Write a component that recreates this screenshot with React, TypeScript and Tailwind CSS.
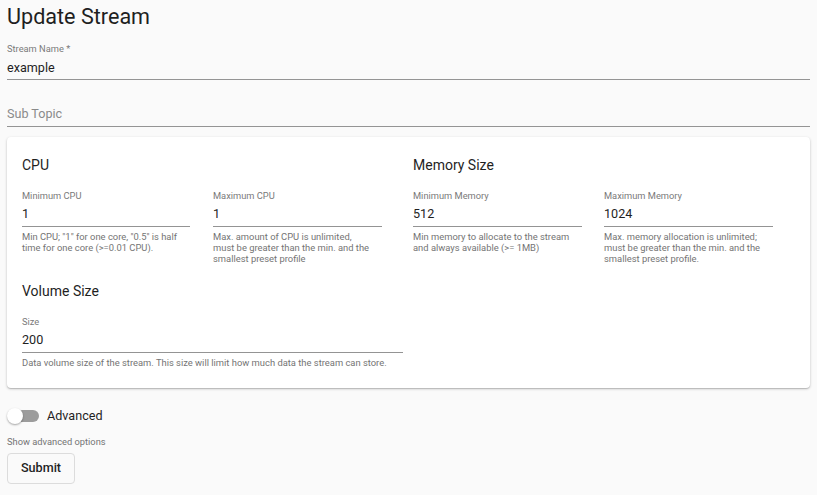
import { useState } from 'react';

const font = { fontFamily: 'Roboto, "Liberation Sans", sans-serif' };

function Field({
  label,
  value,
  helper,
  width,
}: {
  label: string;
  value: string;
  helper: string[];
  width: string;
}) {
  return (
    <div className={width}>
      <div className="mt-[15px] text-[9.3px] leading-[11px] text-[#7a7a7a]">{label}</div>
      <div className="mt-[4px] pb-[3px] border-b border-[#949494]">
        <div className="text-[12.6px] leading-[18px] text-[#1f1f1f]">{value}</div>
      </div>
      <div className="mt-[4px] text-[9.4px] leading-[11px] text-[#747474]">
        {helper.map((h) => (
          <div key={h}>{h}</div>
        ))}
      </div>
    </div>
  );
}

export default function App() {
  const [advanced, setAdvanced] = useState(false);

  return (
    <div className="min-h-screen w-full bg-[#fafafa] px-[7px] pt-[3px]" style={font}>
      <h1 className="text-[21.6px] leading-[28px] font-normal text-[#1f1f1f]">Update Stream</h1>

      <div className="mt-[12px]">
        <div className="text-[9.3px] leading-[11px] text-[#7a7a7a]">Stream Name *</div>
        <div className="mt-[5px] pb-[2px] border-b border-[#949494]">
          <div className="text-[12.6px] leading-[18px] text-[#1f1f1f]">example</div>
        </div>
      </div>

      <div className="mt-[25px] pb-[3px] border-b border-[#949494]">
        <div className="text-[12.6px] leading-[18px] text-[#8a8a8a]">Sub Topic</div>
      </div>

      <div className="mt-[10px] bg-white rounded-[4px] shadow-[0_1px_3px_rgba(0,0,0,0.2),0_1px_1px_rgba(0,0,0,0.14)] px-[15px] pt-[18px] pb-[20px]">
        <div className="flex">
          <div className="w-[391px]">
            <div className="text-[14px] leading-[20px] text-[#1f1f1f]">CPU</div>
            <div className="flex gap-x-[23px]">
              <Field
                width="w-[168px]"
                label="Minimum CPU"
                value="1"
                helper={['Min CPU; "1" for one core, "0.5" is half', 'time for one core (>=0.01 CPU).']}
              />
              <Field
                width="w-[169px]"
                label="Maximum CPU"
                value="1"
                helper={[
                  'Max. amount of CPU is unlimited,',
                  'must be greater than the min. and the',
                  'smallest preset profile',
                ]}
              />
            </div>
          </div>
          <div className="flex-1">
            <div className="text-[14px] leading-[20px] text-[#1f1f1f]">Memory Size</div>
            <div className="flex gap-x-[22px]">
              <Field
                width="w-[169px]"
                label="Minimum Memory"
                value="512"
                helper={['Min memory to allocate to the stream', 'and always available (>= 1MB)']}
              />
              <Field
                width="w-[169px]"
                label="Maximum Memory"
                value="1024"
                helper={[
                  'Max. memory allocation is unlimited;',
                  'must be greater than the min. and the',
                  'smallest preset profile.',
                ]}
              />
            </div>
          </div>
        </div>

        <div className="mt-[17px] text-[14px] leading-[20px] text-[#1f1f1f]">Volume Size</div>
        <Field
          width="w-[381px]"
          label="Size"
          value="200"
          helper={['Data volume size of the stream. This size will limit how much data the stream can store.']}
        />
      </div>

      <div className="mt-[18px] flex items-center h-[20px]">
        <button
          type="button"
          onClick={() => setAdvanced(!advanced)}
          className="relative w-[32px] h-[20px] flex items-center"
        >
          <span className="absolute left-[3px] w-[29px] h-[12px] rounded-full bg-[#9c9c9c]" />
          <span
            className={
              'absolute top-[2px] w-[16px] h-[16px] rounded-full bg-white shadow-[0_1px_2px_rgba(0,0,0,0.35)] ' +
              (advanced ? 'left-[16px]' : 'left-0')
            }
          />
        </button>
        <span className="ml-[8px] text-[12.6px] leading-[20px] text-[#1f1f1f]">Advanced</span>
      </div>
      <div className="mt-[10px] text-[9.3px] leading-[11px] text-[#747474]">Show advanced options</div>

      <button
        type="submit"
        className="mt-[6px] w-[68px] h-[31px] flex items-center justify-center rounded-[4px] border border-[#dcdcdc] bg-[#fafafa] text-[12.6px] font-medium text-[#1f1f1f]"
      >
        Submit
      </button>
    </div>
  );
}
